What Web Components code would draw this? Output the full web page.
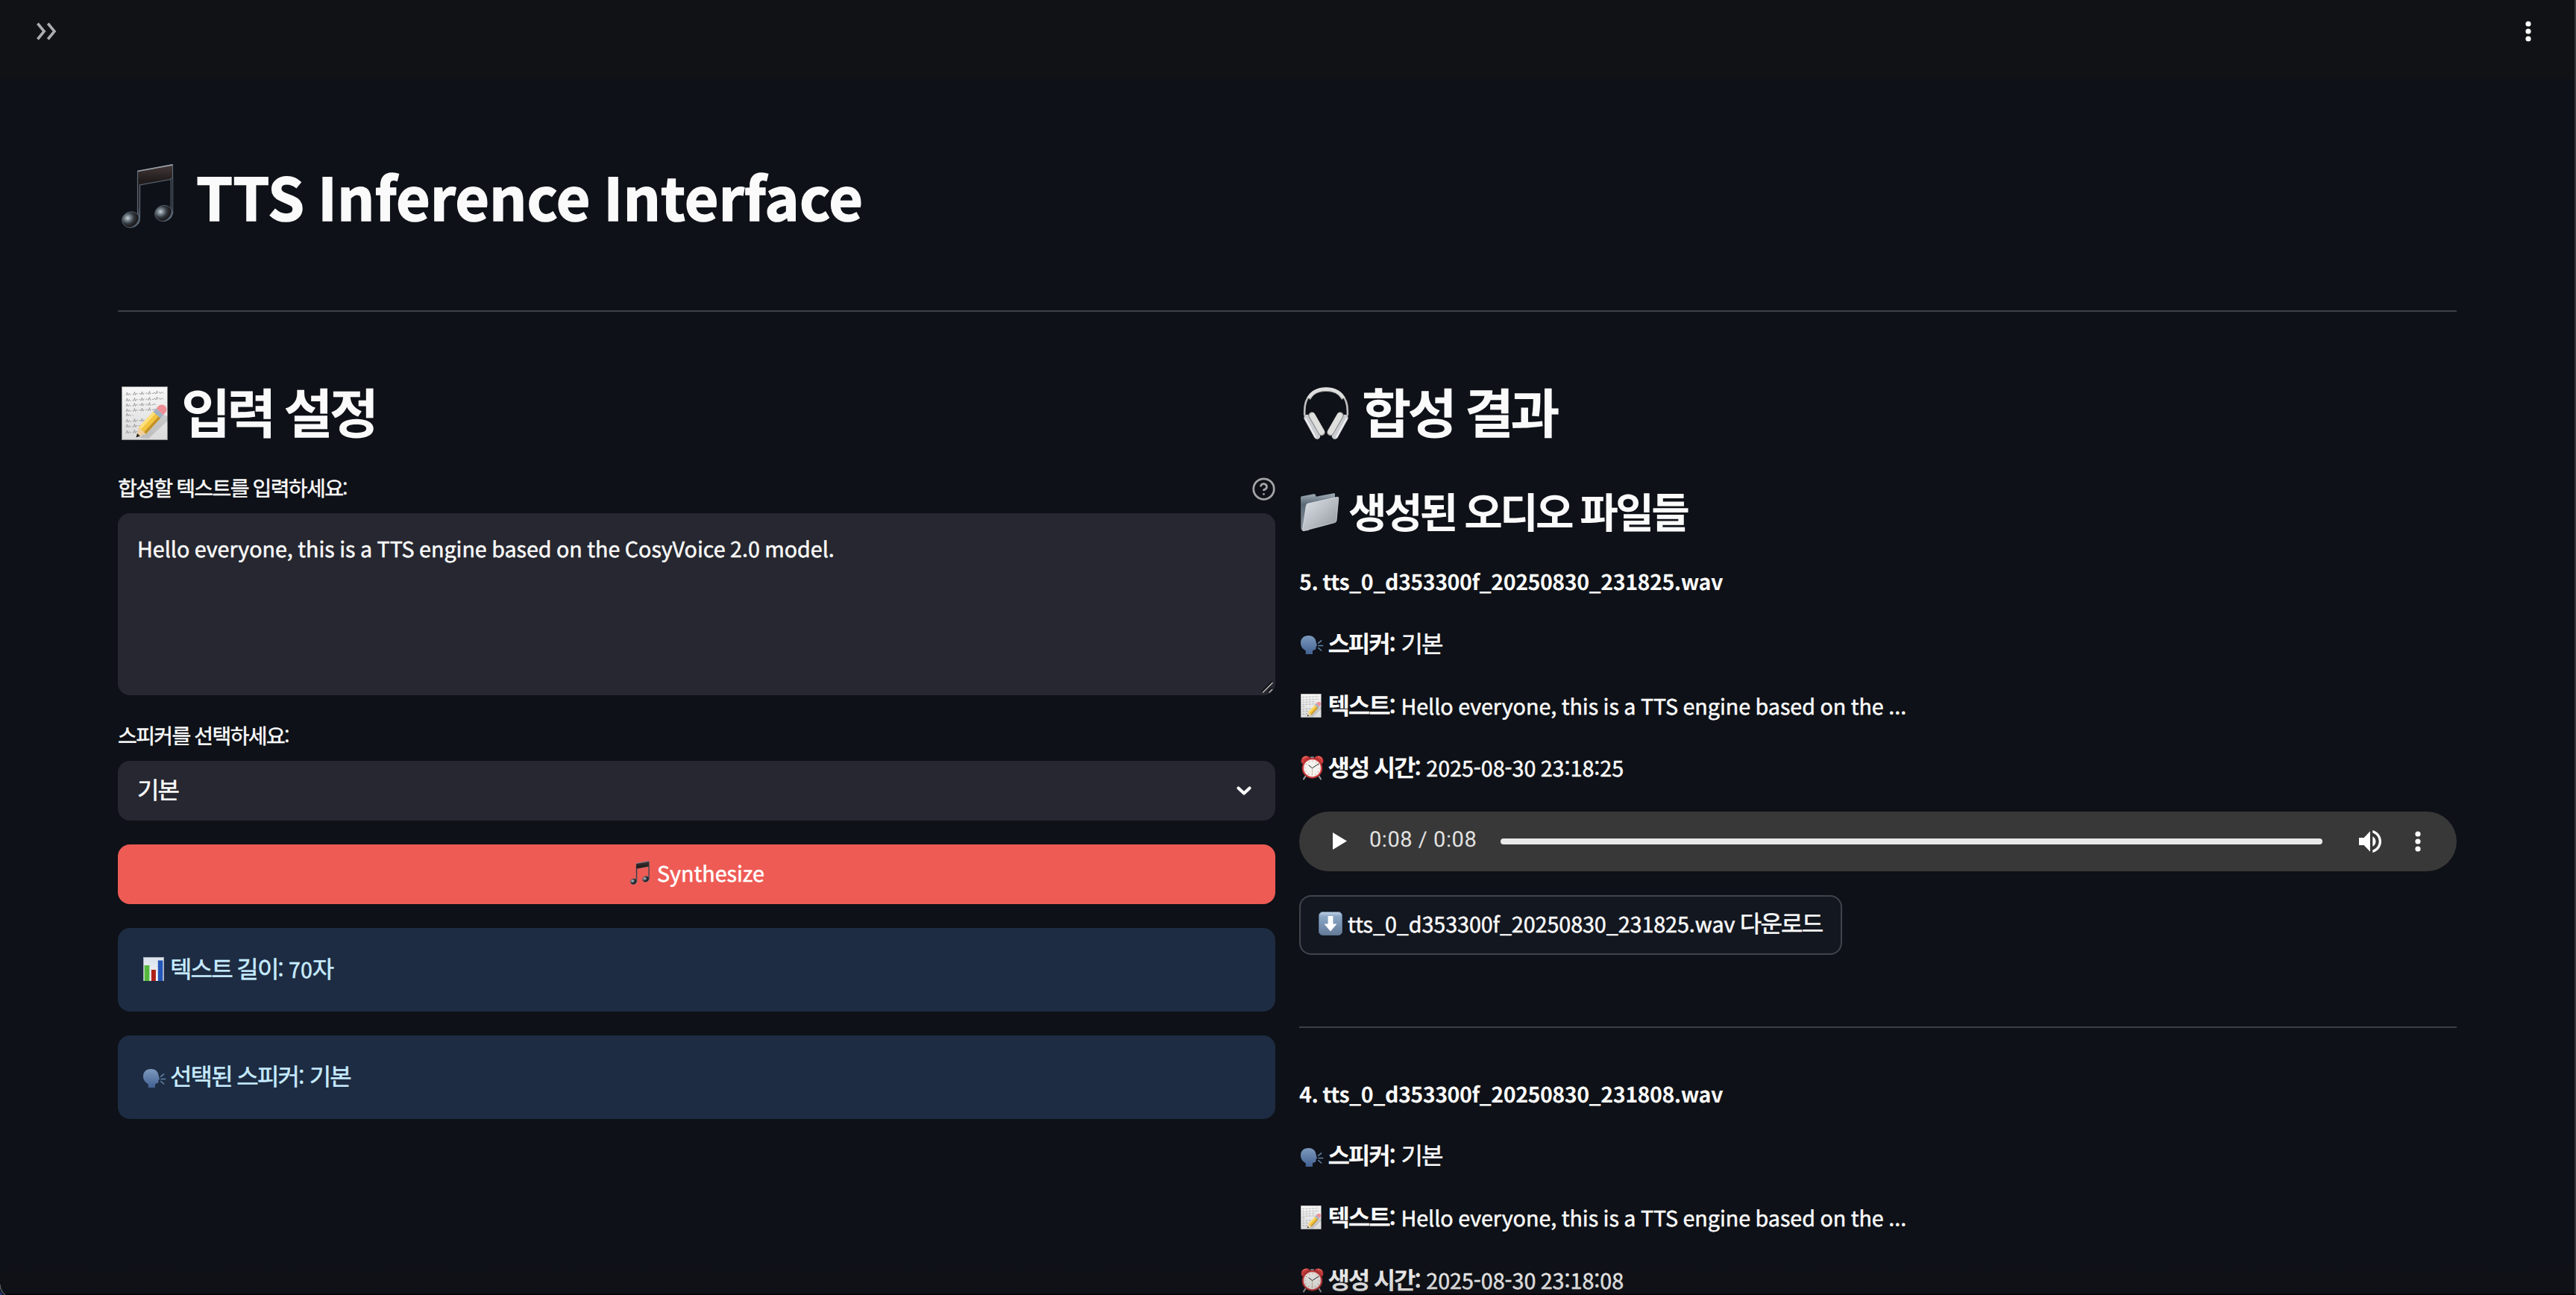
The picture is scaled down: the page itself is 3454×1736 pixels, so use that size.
<!DOCTYPE html>
<html lang="ko">
<head>
<meta charset="utf-8">
<title>TTS Inference Interface</title>
<style>
html,body{margin:0;padding:0;background:#0e1117;color:#fafafa;font-family:"Noto Sans CJK KR","Noto Sans",sans-serif;overflow:hidden;height:1736px;text-rendering:geometricPrecision}
</style>
</head>
<body>
<tts-app></tts-app>
<script>
const define=(name,css,html,setup)=>{
  const t=document.createElement('template');
  t.innerHTML='<style>*,:host{box-sizing:border-box}'+css+'</style>'+html;
  customElements.define(name,class extends HTMLElement{
    connectedCallback(){
      if(this.shadowRoot)return;
      this.attachShadow({mode:'open'}).appendChild(t.content.cloneNode(true));
      if(setup)setup(this,this.shadowRoot);
    }
  });
};

/* Text in mixed scripts: Hangul runs and Latin runs get their own metrics. */
define('mix-text',`
:host{display:inline-block;white-space:pre;flex:none;font-size:var(--s,32px);line-height:var(--l,51.2px);-webkit-text-stroke:var(--st,.5px) currentColor}
.k,.l{line-height:0}
.k{letter-spacing:var(--kt,-.057em)}
.l{font-size:.895em;letter-spacing:var(--lt,0);word-spacing:-.054em}`,`<span id="t"></span>`,(el,r)=>{
  const s=+(el.getAttribute('size')||32);
  el.style.setProperty('--s',s+'px');
  el.style.setProperty('--l',(el.getAttribute('line')||s*1.6)+'px');
  const drop=s<40?2:s===72?0:1;
  el.style.paddingTop=drop+'px';el.style.marginBottom=-drop+'px';
  for(const k of ['lt','kt','st'])if(el.hasAttribute(k))el.style.setProperty('--'+k,el.getAttribute(k));
  el.style.fontWeight=el.getAttribute('weight')||400;
  const box=r.getElementById('t');
  for(const run of el.getAttribute('text').match(/[\uac00-\ud7a3]+|[^\uac00-\ud7a3]+/g)){
    const sp=document.createElement('span');
    sp.className=/[\uac00-\ud7a3]/.test(run)?'k':'l';
    sp.textContent=run;
    box.appendChild(sp);
  }
});

/* Handwritten lines on the note: [baseline, length] */
const scribble=[[10,50],[18,48],[25,44],[32,40],[38,12],[46,28],[53,24],[61,20]].map(([y,n])=>`<path d="M6 ${y+2}${'l1.500-4 1 4 2-2.500 1.500 2 2-2 2 2'.repeat(Math.round(n/10))}" fill="none" stroke="#858585" stroke-width=".75" stroke-dasharray="15 3"/>`).join('');
const PICS={
music:['0 0 70 86',`<defs><linearGradient id="mb" x1="0" y1="0" x2="0" y2="1"><stop offset="0" stop-color="#463a38"/><stop offset=".3" stop-color="#211b1c"/><stop offset=".8" stop-color="#2a2526"/><stop offset="1" stop-color="#43566a"/></linearGradient><radialGradient id="mh" cx=".35" cy=".35" r=".7"><stop offset="0" stop-color="#cfd6dc"/><stop offset=".18" stop-color="#8a959e"/><stop offset=".5" stop-color="#343a41"/><stop offset=".8" stop-color="#1b1718"/><stop offset="1" stop-color="#7489a0"/></radialGradient></defs>
<path d="M21.500 9.500L68.500 .8V20L24.500 28V72H21.500Z" fill="url(#mb)" stroke="#5b6876" stroke-width="1.200"/><path d="M66 19L68.800 18V66H66Z" fill="#252a31" stroke="#55616e" stroke-width=".9"/><path d="M21.500 9.500L68.500 .9" stroke="#9aa0a8" stroke-width="1.600"/>
<g stroke="#566575" stroke-width=".8"><ellipse cx="12.500" cy="74.500" rx="12" ry="10.600" transform="rotate(-14 12.500 74.500)" fill="url(#mh)"/><ellipse cx="56.500" cy="66" rx="12" ry="10.600" transform="rotate(-14 56.500 66)" fill="url(#mh)"/></g>`],
memo:['0 0 66 72',`<defs><linearGradient id="pg" x1="0" y1="0" x2="0" y2="1"><stop offset="0" stop-color="#f8f8f8"/><stop offset="1" stop-color="#dadada"/></linearGradient></defs>
<rect x=".4" y=".4" width="61" height="71.200" fill="url(#pg)" stroke="#8f8f8f" stroke-width=".8"/>${scribble}
<path d="M24 69L56 38L62 40V46L36 70Z" fill="#000" opacity=".13"/>
<g transform="translate(19.500 68.500) rotate(-47.500)"><path d="M0 0L13-6.500V6.500Z" fill="#efcf9d"/><path d="M0 0L5-2.600V2.600Z" fill="#222"/><rect x="12.500" y="-6.500" width="29" height="13" fill="#f2c440"/><rect x="12.500" y="-6.500" width="29" height="4" fill="#ffe07a"/><rect x="12.500" y="3" width="29" height="3.500" fill="#c2922a"/><rect x="41" y="-6.500" width="6" height="13" fill="#9fb0c4"/><path d="M47-6.500h4a6.500 6.500 0 0 1 0 13h-4z" fill="#ee8f96"/></g>`],
phones:['0 0 62 70',`<path d="M2.200 38V32C2.200 12 14 1.800 31 1.800S59.800 12 59.800 32V38" fill="none" stroke="#bdbdbd" stroke-width="2.600"/><path d="M8 15C13 5.500 21 2.800 31 2.800S49 5.500 54 15" fill="none" stroke="#dedede" stroke-width="5"/><path d="M9 17C14 8 22 5.500 31 5.500S48 8 53 17" fill="none" stroke="#9b9b9b" stroke-width="1"/>
<g><path d="M5.500 41L19 65.500" stroke="#c9ccd0" stroke-width="8.500" stroke-linecap="round"/><path d="M3.500 42L17 67" stroke="#f3f3f5" stroke-width="1.600" stroke-linecap="round"/><path d="M12 38L25 60.500" stroke="#8d8d8d" stroke-width="9.400" stroke-linecap="round"/><path d="M12.500 38L25 60" stroke="#dfdfde" stroke-width="7.600" stroke-linecap="round"/></g>
<g transform="translate(62 0) scale(-1 1)"><path d="M5.500 41L19 65.500" stroke="#c9ccd0" stroke-width="8.500" stroke-linecap="round"/><path d="M3.500 42L17 67" stroke="#f3f3f5" stroke-width="1.600" stroke-linecap="round"/><path d="M12 38L25 60.500" stroke="#8d8d8d" stroke-width="9.400" stroke-linecap="round"/><path d="M12.500 38L25 60" stroke="#dfdfde" stroke-width="7.600" stroke-linecap="round"/></g>`],
folder:['0 0 153 152',`<defs><linearGradient id="ff" x1="0" y1="0" x2="1" y2="1"><stop offset="0" stop-color="#dfe3ea"/><stop offset=".5" stop-color="#b9bec4"/><stop offset="1" stop-color="#8e9499"/></linearGradient><linearGradient id="fb" x1="0" y1="0" x2="0" y2="1"><stop offset="0" stop-color="#a2adb8"/><stop offset=".3" stop-color="#5a6875"/><stop offset="1" stop-color="#8d98a2"/></linearGradient></defs>
<path d="M0 18Q0 14 5 13L52 4Q59 3 60 8L62 14L133 1Q138 0 138 5V30L30 150H8Q1 148 1 140Z" fill="url(#fb)"/>
<path d="M22 50Q23 44 29 42L147 16Q153 15 152.500 21L144 110Q143 116 137 118L12 151Q7 152 8 146Z" fill="url(#ff)" stroke="#e7ebef" stroke-width="2"/>`],
speak:['0 0 90 76',`<defs><linearGradient id="sg" x1="0" y1="0" x2="0" y2="1"><stop offset="0" stop-color="#7c9abd"/><stop offset="1" stop-color="#426091"/></linearGradient></defs>
<path d="M31 0C48 0 60 10 61.500 25L66 41Q66 44 62 44L61 54Q60 60 51 59Q47 60 48 76H20Q23 68 19 61C7 54 0 44 0 30C0 12 12 0 31 0Z" fill="url(#sg)"/><path d="M71 31L83 21M72 41H89M71 50L83 61" stroke="#6486aa" stroke-width="4.600" stroke-linecap="round"/>`],
clock:['0 0 94 96',`<path d="M20 82L12 94M74 82L82 94" stroke="#9a9a9a" stroke-width="6" stroke-linecap="round"/><path d="M40 4H54V12H40Z" fill="#999"/><path d="M2 26Q0 4 22 1Q34 1 38 9Q16 16 10 33Q4 32 2 26Z" fill="#cf3d3d"/><path d="M92 26Q94 4 72 1Q60 1 56 9Q78 16 84 33Q90 32 92 26Z" fill="#cf3d3d"/>
<path d="M8 12Q14 4 24 4M70 4Q80 4 86 12" stroke="#f08a83" stroke-width="3" fill="none"/><circle cx="47" cy="50" r="42" fill="#a92b2c"/><circle cx="47" cy="50" r="39" fill="#d2484a"/><circle cx="47" cy="50" r="34.500" fill="#f4f3ef"/><circle cx="47" cy="50" r="28" fill="none" stroke="#c9756f" stroke-width="5" stroke-dasharray="2 12.660"/><path d="M32 38L47 50L74 32" fill="none" stroke="#222" stroke-width="3"/><path d="M47 50V78" stroke="#b9a680" stroke-width="2"/>`],
chart:['0 0 28 32',`<defs><linearGradient id="cg" x1="0" y1="0" x2="0" y2="1"><stop offset="0" stop-color="#dbe2ec"/><stop offset="1" stop-color="#f3f5f7"/></linearGradient></defs><rect width="28" height="32" fill="url(#cg)"/><path d="M.5 32V.5H27.500V32" fill="none" stroke="#aab0ba"/><rect x="1.600" y="11" width="6.800" height="21" fill="#55b83c"/><rect x="10.900" y="17" width="6" height="15" fill="#ae2119"/><rect x="19.800" y="4.500" width="6.600" height="27.500" fill="#2456b8"/>`],
down:['0 0 32 32',`<defs><linearGradient id="dg" x1="0" y1="0" x2="0" y2="1"><stop offset="0" stop-color="#c3d3e6"/><stop offset=".2" stop-color="#8ba6c6"/><stop offset="1" stop-color="#647b98"/></linearGradient></defs><rect x=".5" y=".5" width="31" height="31" rx="5" fill="url(#dg)" stroke="#5c7592"/><path d="M12.600 6H19.400V16.500H24.500L16 26.500L7.500 16.500H12.600Z" fill="#fff"/>`],
more:['0 0 8 28',`<g fill="#fff"><circle cx="4" cy="4" r="3.600"/><circle cx="4" cy="14" r="3.600"/><circle cx="4" cy="24" r="3.600"/></g>`],
expand:['0 0 28 24',`<path d="M2.500 1.500L11.200 12L2.500 22.500M16.300 1.500L25 12L16.300 22.500" fill="none" stroke="#acadaf" stroke-width="3.600"/>`],
help:['0 0 24 24',`<g fill="none" stroke="#a3a4a7" stroke-width="2" stroke-linecap="round" stroke-linejoin="round"><circle cx="12" cy="12" r="10"/><path d="M9.090 9a3 3 0 0 1 5.830 1c0 2-3 3-3 3M12 17h.01"/></g>`],
chev:['0 0 20 12',`<path d="M2.500 2.500L10 9.500L17.500 2.500" fill="none" stroke="#fafafa" stroke-width="4.300" stroke-linecap="round" stroke-linejoin="round"/>`],
grip:['0 0 16 16',`<path d="M1 14.500L14.500 .5M9.500 14.500L14.500 9" stroke="#111" stroke-width="2"/><path d="M2 15.500L15.500 2M10.500 15.500L15 11" stroke="#b9b9bb" stroke-width="1.500"/>`],
play:['0 0 19 23',`<path d="M0 0L19 11.500L0 23Z" fill="#fff"/>`],
volume:['3 3.200 18 17.600',`<path d="M3 9v6h4l5 5V4L7 9H3zm13.500 3c0-1.770-1.020-3.290-2.500-4.030v8.050c1.480-.73 2.500-2.250 2.500-4.020zM14 3.230v2.060c2.890.86 5 3.540 5 6.710s-2.110 5.850-5 6.710v2.060c4.010-.91 7-4.490 7-8.770s-2.990-7.860-7-8.770z" fill="#fff"/>`]
};
define('pic-icon',`:host{display:block;flex:none}svg{display:block;width:100%;height:100%;overflow:visible}.box{width:100%;height:100%}`,`<div class="box"></div>`,(el,r)=>{
  const p=PICS[el.getAttribute('name')];
  el.style.width=el.getAttribute('w')+'px';el.style.height=el.getAttribute('h')+'px';
  r.querySelector('.box').innerHTML=`<svg viewBox="${p[0]}" preserveAspectRatio="none">${p[1]}</svg>`;
});

define('app-header',`:host{display:flex;height:104px;background:#111216;justify-content:space-between;align-items:flex-start;padding:30px 60px 0 48px}`,
`<pic-icon name="expand" w="28" h="24"></pic-icon><pic-icon name="more" w="8" h="28" style="margin-top:-2px"></pic-icon>`);

define('rule-line',`:host{display:block;height:2px;background:#3d4045}`,``);

define('head-line',`:host{display:flex;align-items:flex-start}`,`<slot></slot>`);

define('app-alert',`:host{display:flex;height:112px;border-radius:16px;background:#1d2c42;color:#c7ebff;padding:27px 34px 0;margin-top:32px}`,`<slot></slot>`);

define('audio-bar',`
:host{display:flex;height:80px;border-radius:40px;background:#383838;align-items:center;padding:0 48px 0 45px}
.time{font:400 29px/36px Roboto,"Noto Sans",sans-serif;color:#e2e2e2;width:144px;margin:-3px 0 0 30px;white-space:pre;letter-spacing:.55px}
.track{flex:1;height:8px;border-radius:4px;background:#e9e9e9;margin:0 49px 0 32px}`,
`<pic-icon name="play" w="19" h="23"></pic-icon><span class="time">0:08 / 0:08</span><div class="track"></div><pic-icon name="volume" w="30" h="30"></pic-icon><pic-icon name="more" w="8" h="28" style="margin-left:45px"></pic-icon>`);

/* Result entry: title, three detail rows, then slotted player and download. */
class TtsResult extends HTMLElement{
  connectedCallback(){
    if(this.shadowRoot)return;
    const a=n=>this.getAttribute(n);
    const row=(ic,w,h,y,k,v)=>`<div class="row"><div class="i"><pic-icon name="${ic}" w="${w}" h="${h}" style="margin-top:${y}px"></pic-icon></div><mix-text weight="600" st="0" kt="-.065em" text="${k}: "></mix-text><mix-text text="${v}"></mix-text></div>`;
    this.attachShadow({mode:'open'}).innerHTML=`<style>*{box-sizing:border-box}:host{display:block}.row{display:flex;height:51.200px;margin-top:32px}.row:first-of-type{margin-top:0}.i{width:38.500px;padding-left:2px;flex:none}</style>
    <div class="row"><mix-text weight="600" st="0" lt="-.480px" text="${a('title-text')}"></mix-text></div>
    ${row('speak',30,25,17.500,'스피커','기본')}
    ${row('memo',29.500,32,12,'텍스트','Hello everyone, this is a TTS engine based on the ...')}
    ${row('clock',31,32,12,'생성 시간',a('time'))}<slot></slot>`;
  }
}
customElements.define('tts-result',TtsResult);

define('select-box',`:host{display:flex;height:80px;border-radius:16px;background:#262730;padding:11.500px 32px 0 26px;justify-content:space-between}`,
`<slot></slot><pic-icon name="chev" w="20" h="12" style="margin-top:22.500px"></pic-icon>`);
define('primary-button',`:host{display:flex;height:80px;border-radius:16px;background:#ee5b55;color:#fff;justify-content:center;padding:10.500px 0 0 2px;margin-top:32px}`,`<slot></slot>`);
define('download-button',`:host{display:flex;width:728px;height:80px;border:2px solid #41444c;border-radius:16px;background:#131720;padding:8px 24px 0;margin-top:32px}`,`<slot></slot>`);

class TtsApp extends HTMLElement{
  connectedCallback(){
    this.attachShadow({mode:'open'}).innerHTML=`<style>*{box-sizing:border-box}
    :host{display:block;position:relative;height:1736px;overflow:hidden;background:#0e1117}
    main{padding:100.800px 160px 0 158px}
    .cols{display:flex;gap:32px;margin-top:89.400px}
    .col{width:1552px;flex:none}
    .fade{position:absolute;left:0;right:0;bottom:0;height:50px;background:linear-gradient(#12111200,#12111233)}
    .edge{position:absolute;inset:0;border-right:2px solid #39393d;border-bottom:2px solid #07060c}
    .corner{position:absolute;left:0;bottom:0;width:8px;height:14px}
    </style>
    <app-header></app-header>
    <main>
      <head-line><pic-icon name="music" w="70" h="86" style="margin:15px 30px 0 5px"></pic-icon><mix-text size="88" line="105.600" weight="700" st="1.500px" lt=".05px" text="TTS Inference Interface"></mix-text></head-line>
      <rule-line style="margin-top:105.600px"></rule-line>
      <div class="cols">
        <div class="col">
          <head-line><pic-icon name="memo" w="66" h="72" style="margin:10.600px 14px 0 5px"></pic-icon><mix-text size="72" line="86.400" weight="600" st="0" kt="-.068em" text="입력 설정"></mix-text></head-line>
          <div style="height:36.200px"></div>
          <div style="display:flex;justify-content:space-between;height:58px"><mix-text size="28" text="합성할 텍스트를 입력하세요:"></mix-text><pic-icon name="help" w="33" h="33" style="margin:9.500px -.5px 0 0"></pic-icon></div>
          <div style="display:flex;justify-content:space-between;height:244px;border-radius:16px;background:#262730;padding:19.400px 3px 3px 26px"><mix-text text="Hello everyone, this is a TTS engine based on the CosyVoice 2.0 model."></mix-text><pic-icon name="grip" w="16" h="16" style="align-self:flex-end"></pic-icon></div>
          <div style="height:58px;margin-top:30px"><mix-text size="28" text="스피커를 선택하세요:"></mix-text></div>
          <select-box><mix-text text="기본"></mix-text></select-box>
          <primary-button><pic-icon name="music" w="26" h="32" style="margin:11.500px 10px 0 0"></pic-icon><mix-text text="Synthesize"></mix-text></primary-button>
          <app-alert><pic-icon name="chart" w="28" h="32" style="margin-top:12px"></pic-icon><mix-text style="margin-left:8px" text="텍스트 길이: 70자"></mix-text></app-alert>
          <app-alert><pic-icon name="speak" w="30" h="25" style="margin-top:18px"></pic-icon><mix-text style="margin-left:6px" text="선택된 스피커: 기본"></mix-text></app-alert>
        </div>
        <div class="col">
          <head-line><pic-icon name="phones" w="62" h="70" style="margin:11.600px 17px 0 5px"></pic-icon><mix-text size="72" line="86.400" weight="600" st="0" kt="-.065em" text="합성 결과"></mix-text></head-line>
          <head-line style="margin-top:56.700px"><pic-icon name="folder" w="51" h="51" style="margin:11px 13px 0 2px"></pic-icon><mix-text size="56" line="67.200" weight="600" st="0" kt="-.064em" text="생성된 오디오 파일들"></mix-text></head-line>
          <tts-result style="margin-top:33.700px" title-text="5. tts_0_d353300f_20250830_231825.wav" time="2025-08-30 23:18:25">
            <audio-bar style="margin-top:35.800px"></audio-bar>
            <download-button><pic-icon name="down" w="32" h="32" style="margin:12px 7px 0 0"></pic-icon><mix-text lt="-.03px" text="tts_0_d353300f_20250830_231825.wav 다운로드"></mix-text></download-button>
            <rule-line style="margin-top:96px"></rule-line>
          </tts-result>
          <tts-result style="margin-top:60.200px" title-text="4. tts_0_d353300f_20250830_231808.wav" time="2025-08-30 23:18:08"></tts-result>
        </div>
      </div>
    </main>
    <div class="fade"></div><div class="edge"></div>
    <svg class="corner" viewBox="0 0 8 14"><path d="M0 9L4 14H0Z" fill="#22357c"/><path d="M0 0C0 6 2 10 7 14" fill="none" stroke="#5a5c62" stroke-width="1.500"/></svg>`;
  }
}
customElements.define('tts-app',TtsApp);
</script>
</body>
</html>
